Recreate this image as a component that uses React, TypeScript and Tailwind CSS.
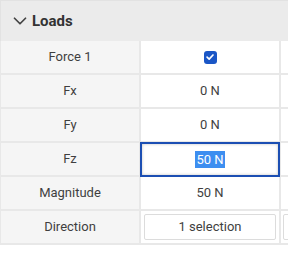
import { ChevronDown } from "lucide-react";

const rows = [
  { label: "Force 1", kind: "check" },
  { label: "Fx", kind: "text", value: "0 N" },
  { label: "Fy", kind: "text", value: "0 N" },
  { label: "Fz", kind: "edit", value: "50 N" },
  { label: "Magnitude", kind: "text", value: "50 N" },
  { label: "Direction", kind: "select", value: "1 selection" },
];

function Value({ row }: { row: (typeof rows)[number] }) {
  if (row.kind === "check") {
    return (
      <div className="flex h-full items-center justify-center">
        <span className="flex h-[13px] w-[13px] items-center justify-center rounded-[3px] bg-[#1a56c6]">
          <svg viewBox="0 0 12 12" className="h-[10px] w-[10px]">
            <path d="M2.5 6.2 5 8.6 9.6 3.6" fill="none" stroke="white" strokeWidth="2" strokeLinecap="round" strokeLinejoin="round" />
          </svg>
        </span>
      </div>
    );
  }
  if (row.kind === "edit") {
    return (
      <div className="-m-[1px] flex h-[35px] items-center justify-center border-2 border-[#1c4fb3] bg-white shadow-[inset_0_0_3px_rgba(0,0,0,0.25)]">
        <span className="bg-[#3d8ef0] px-[1px] leading-[17px] text-white">{row.value}</span>
      </div>
    );
  }
  if (row.kind === "select") {
    return (
      <div className="flex h-full items-center px-[3px]">
        <div className="flex h-[26px] w-full items-center justify-center rounded-[2px] border border-[#dcdcdc] bg-white">
          {row.value}
        </div>
      </div>
    );
  }
  return <div className="flex h-full items-center justify-center">{row.value}</div>;
}

export default function App() {
  return (
    <div
      className="h-[256px] w-[288px] overflow-hidden bg-white text-[13px] text-[#3f3f3f]"
      style={{ fontFamily: "Roboto, 'Noto Sans', sans-serif" }}
    >
      <div className="flex h-[41px] items-center gap-[1px] border-t border-l border-[#e2e2e2] bg-[#ebebeb] pl-[8px]">
        <ChevronDown className="h-[22px] w-[22px] text-[#444]" strokeWidth={1.9} />
        <span className="text-[15px] font-bold text-[#333]">Loads</span>
      </div>
      <div className="flex w-[400px] flex-col gap-[2px] bg-[#e8e8e8] pl-[1px] pb-[2px]">
        {rows.map((row) => (
          <div key={row.label} className="flex h-[32px] gap-[2px]">
            <div className="flex w-[138px] items-center justify-center bg-[#f5f5f5]">{row.label}</div>
            <div className="w-[138px] bg-white">
              <Value row={row} />
            </div>
            <div className="flex-1 bg-white">
              {row.kind === "select" && (
                <div className="flex h-full items-center pl-[2px]">
                  <div className="h-[26px] w-full rounded-[2px] border border-[#dcdcdc] bg-white" />
                </div>
              )}
            </div>
          </div>
        ))}
      </div>
    </div>
  );
}
